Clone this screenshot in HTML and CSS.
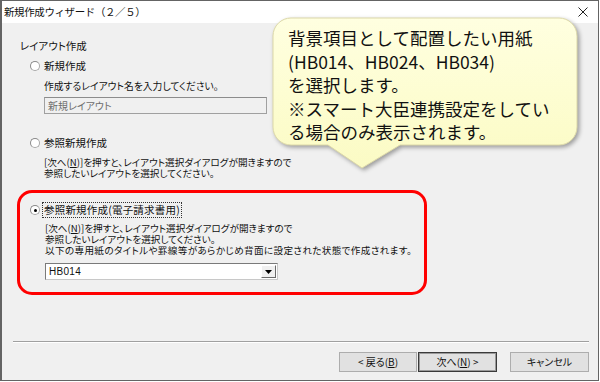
FILE: index.html
```html
<!DOCTYPE html>
<html lang="ja">
<head>
<meta charset="utf-8">
<title>新規作成ウィザード</title>
<link rel="stylesheet" href="styles.css">
</head>
<body>
<div class="window">
  <div class="titlebar">
    <span class="title">新規作成ウィザード（２／５）</span>
    <svg class="close" width="12" height="12" viewBox="0 0 12 12"><path d="M1.5 1.5 L10.5 10.5 M10.5 1.5 L1.5 10.5" stroke="#222" stroke-width="1" fill="none"/></svg>
  </div>
  <div class="body">
    <div class="section-label">レイアウト作成</div>
    <div class="radio-row row1"><span class="radio"></span><span>新規作成</span></div>
    <div class="indent desc">作成するレイアウト名を入力してください。</div>
    <div class="indent input">新規レイアウト</div>
    <div class="radio-row row2"><span class="radio"></span><span>参照新規作成</span></div>
    <div class="indent desc2">[次へ(<span class="ul">N</span>)]を押すと、レイアウト選択ダイアログが開きますので<br>参照したいレイアウトを選択してください。</div>
    <div class="highlight">
      <div class="radio-row"><span class="radio checked"></span><span class="focus">参照新規作成(電子請求書用)</span></div>
      <div class="desc3">[次へ(<span class="ul">N</span>)]を押すと、レイアウト選択ダイアログが開きますので<br>参照したいレイアウトを選択してください。<br><span class="wide">以下の専用紙のタイトルや罫線等があらかじめ背面に設定された状態で作成されます。</span></div>
      <div class="select"><span class="select-value">HB014</span><span class="drop"><svg width="7" height="4" viewBox="0 0 7 4"><path d="M0 0 H7 L3.5 4 Z" fill="#000"/></svg></span></div>
    </div>
    <div class="sep"></div>
    <div class="buttons">
      <div class="btn">&lt; 戻る(<span class="ul">B</span>)</div>
      <div class="btn default">次へ(<span class="ul">N</span>) &gt;</div>
      <div class="btn cancel">キャンセル</div>
    </div>
  </div>
  <div class="callout">
    <svg class="callout-shape" width="320" height="160" viewBox="0 0 320 160">
      <defs>
        <linearGradient id="cg" x1="0" y1="0" x2="0" y2="1">
          <stop offset="0" stop-color="#ffffe0"/>
          <stop offset="1" stop-color="#fbfbc4"/>
        </linearGradient>
      </defs>
      <path d="M19,1 H287 A18,18 0 0 1 305,19 V110 A18,18 0 0 1 287,128 H128 L90,151 L56,128 H19 A18,18 0 0 1 1,110 V19 A18,18 0 0 1 19,1 Z" fill="url(#cg)" stroke="#dcd8a8" stroke-width="1"/>
    </svg>
    <div class="callout-text">背景項目として配置したい用紙<br>(HB014、HB024、HB034)<br>を選択します。<br>※スマート大臣連携設定をしてい<br>る場合のみ表示されます。</div>
  </div>
</div>
</body>
</html>
```
FILE: styles.css
```css
* { box-sizing: border-box; }
html, body { margin: 0; padding: 0; background: #ffffff; }
body {
  font-family: "Noto Sans CJK JP", "Noto Sans", sans-serif;
  font-feature-settings: "palt";
  color: #111;
}
.window {
  position: relative;
  width: 599px;
  height: 381px;
  border: 1px solid #646464;
  border-left-width: 2px;
  background: #f0f0f0;
  overflow: hidden;
}
.titlebar {
  height: 22px;
  background: #ffffff;
  display: flex;
  align-items: center;
  justify-content: space-between;
  padding: 0 9px 0 2px;
}
.title {
  font-size: 10.5px;
  line-height: 12px;
  color: #111;
  font-feature-settings: normal;
  letter-spacing: -0.4px;
}
.close { display: block; }
.body {
  padding: 0 9px 0 18px;
}
.section-label {
  margin-top: 17px;
  font-size: 10.5px;
  line-height: 12px;
}
.radio-row {
  display: flex;
  align-items: center;
  height: 12px;
  padding-left: 10px;
  font-size: 10.5px;
  line-height: 12px;
}
.row1 { margin-top: 8px; }
.row2 { margin-top: 23px; }
.radio {
  width: 10px;
  height: 10px;
  border-radius: 50%;
  border: 1px solid #a8a8a8;
  border-top-color: #8a8a8a;
  border-left-color: #8a8a8a;
  background: #ffffff;
  margin-right: 4px;
  flex: none;
  position: relative;
}
.radio.checked::after {
  content: "";
  position: absolute;
  left: 2.5px;
  top: 2.5px;
  width: 3px;
  height: 3px;
  border-radius: 50%;
  background: #000;
}
.indent { margin-left: 24px; }
.desc {
  margin-top: 8px;
  font-size: 9.8px;
  line-height: 12px;
}
.input {
  margin-top: 5px;
  width: 223px;
  height: 17px;
  border: 1px solid #a0a0a0;
  border-top-color: #8c8c8c;
  background: #f0f0f0;
  color: #6d6d6d;
  font-size: 10px;
  line-height: 15px;
  padding-left: 3px;
}
.desc2 {
  margin-top: 8px;
  font-size: 9.6px;
  line-height: 11px;
}
.ul {
  display: inline-block;
  height: 11px;
  line-height: 11px;
  text-decoration: underline;
  vertical-align: top;
}
.btn .ul {
  height: 18px;
  line-height: 18px;
}
.wide { letter-spacing: 0.35px; }
.highlight {
  margin-top: 11px;
  margin-left: -3px;
  width: 410px;
  border: 3px solid #ff0000;
  border-radius: 15px;
  padding: 11px 0 12px 0;
}
.focus {
  outline: 1px dotted #333;
  outline-offset: 1px;
  letter-spacing: 0.2px;
}
.desc3 {
  margin-top: 7px;
  margin-left: 25px;
  font-size: 9.6px;
  line-height: 11px;
}
.select {
  margin-top: 7px;
  margin-left: 25px;
  width: 233px;
  height: 17px;
  border: 1px solid #7a7a7a;
  border-right-color: #c8c8c8;
  border-bottom-color: #c8c8c8;
  background: #ffffff;
  display: flex;
  align-items: center;
  justify-content: space-between;
  padding: 0 1px 0 3px;
}
.select-value {
  font-family: "Liberation Sans", "Noto Sans", sans-serif;
  font-size: 10px;
  line-height: 12px;
  letter-spacing: 0.3px;
}
.drop {
  width: 15px;
  height: 13px;
  background: #f0f0f0;
  border: 1px solid #ffffff;
  border-right-color: #6a6a6a;
  border-bottom-color: #6a6a6a;
  display: flex;
  align-items: center;
  justify-content: center;
}
.drop svg { display: block; }
.sep {
  margin-top: 46px;
  margin-left: -7px;
  width: 576px;
  height: 2px;
  border-top: 1px solid #a0a0a0;
  border-bottom: 1px solid #ffffff;
}
.buttons {
  margin-top: 9px;
  display: flex;
  justify-content: flex-end;
}
.btn {
  width: 78px;
  height: 20px;
  border: 1px solid #adadad;
  background: #e1e1e1;
  font-size: 10px;
  line-height: 18px;
  text-align: center;
}
.btn.default {
  width: 79px;
  margin-left: 1px;
  border: 1px solid #3a3a3a;
  box-shadow: inset 0 0 0 1px #9a9a9a;
}
.btn.cancel {
  width: 79px;
  margin-left: 13px;
}
.callout {
  position: absolute;
  left: 270px;
  top: 16px;
  width: 320px;
  height: 160px;
}
.callout-shape {
  position: absolute;
  left: 0;
  top: 0;
  filter: drop-shadow(2px 2px 2px rgba(0, 0, 0, 0.35));
}
.callout-text {
  position: absolute;
  left: 16px;
  top: 9px;
  font-family: "Noto Sans CJK JP", sans-serif;
  font-feature-settings: normal;
  font-size: 17.5px;
  line-height: 23.5px;
  color: #111;
  white-space: nowrap;
}
```
